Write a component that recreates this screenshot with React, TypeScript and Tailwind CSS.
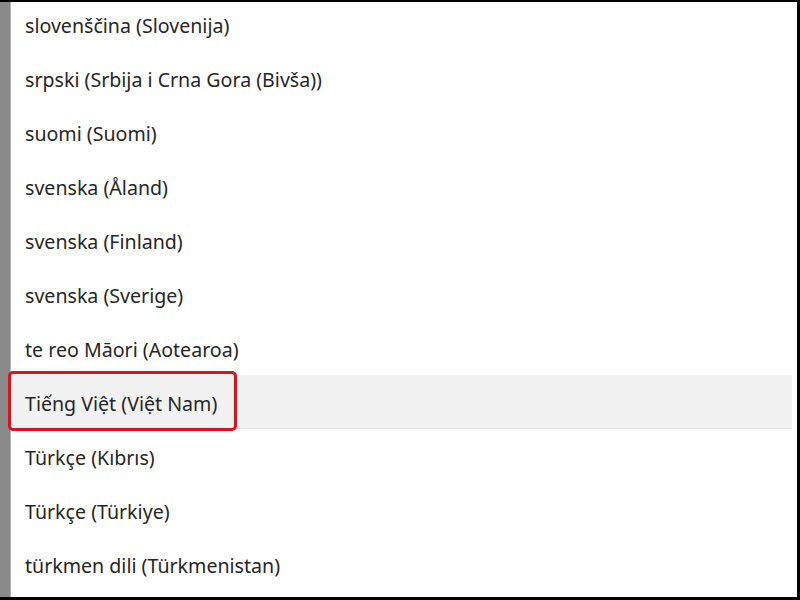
import React from "react";

const languages = [
  "slovenščina (Slovenija)",
  "srpski (Srbija i Crna Gora (Bivša))",
  "suomi (Suomi)",
  "svenska (Åland)",
  "svenska (Finland)",
  "svenska (Sverige)",
  "te reo Māori (Aotearoa)",
  "Tiếng Việt (Việt Nam)",
  "Türkçe (Kıbrıs)",
  "Türkçe (Türkiye)",
  "türkmen dili (Türkmenistan)",
];

const selected = "Tiếng Việt (Việt Nam)";

const App: React.FC = () => {
  return (
    <div
      className="w-[800px] h-[600px] flex bg-white border-t-2 border-r-[3px] border-b-[3px] border-black overflow-hidden"
      style={{ fontFamily: '"Noto Sans", "Open Sans", sans-serif' }}
    >
      <div className="w-[11px] shrink-0 bg-[#8a8a8a] border-r border-[#b5b5b5]" />
      <div className="flex-1 pr-[5px]">
        <div className="-mt-[5px] flex flex-col">
          {languages.map((lang) => {
            const isSelected = lang === selected;
            return (
              <div
                key={lang}
                className={`relative h-[54px] shrink-0 flex items-center pl-[14px] pt-[4px] text-[19.6px] text-[#262626] ${
                  isSelected ? "bg-[#f1f1f1] border-b border-[#e8e8e8]" : ""
                }`}
              >
                {isSelected && (
                  <div className="absolute left-[-3px] top-[-4px] w-[229px] h-[60px] border-[3px] border-[#d8141c] rounded-[5px]" />
                )}
                <span className="relative">{lang}</span>
              </div>
            );
          })}
        </div>
      </div>
    </div>
  );
};

export default App;
